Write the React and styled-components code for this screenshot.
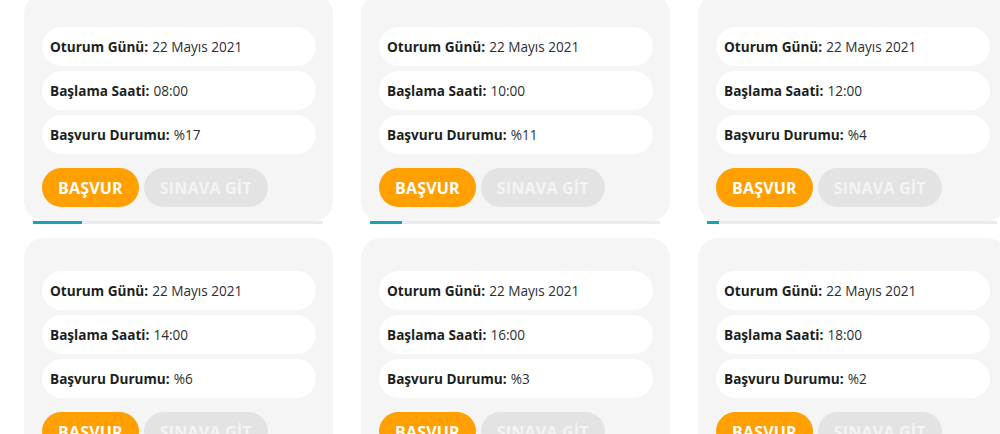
import React from "react"
import styled, { createGlobalStyle } from "styled-components"

const GlobalStyle = createGlobalStyle`
  body {
    margin: 0;
    background: #fff;
    overflow: hidden;
    font-family: "Open Sans", "Noto Sans", sans-serif;
  }
`

const Grid = styled.div`
  display: grid;
  grid-template-columns: repeat(3, 309px);
  column-gap: 28px;
  row-gap: 14px;
  margin: -6px 0 0 24px;
`

const Column = styled.div`
  display: flex;
  flex-direction: column;
`

const Card = styled.div`
  background: #f5f5f5;
  border-radius: 20px;
  padding: 33px 17px 14px 18px;
  display: flex;
  flex-direction: column;
  gap: 5px;
`

const Row = styled.div`
  height: 39px;
  background: #fff;
  border-radius: 20px;
  display: flex;
  align-items: center;
  padding: 0 8px;
  font-size: 13.6px;
  color: #2b2f33;

  b {
    font-weight: 700;
    color: #1c1f22;
    margin-right: 4px;
  }
`

const Actions = styled.div`
  display: flex;
  gap: 5px;
  margin-top: 9px;
`

const Button = styled.button`
  height: 39px;
  border: 0;
  border-radius: 20px;
  padding: 0 16px;
  font-family: inherit;
  font-size: 16px;
  font-weight: 700;
  letter-spacing: 0.2px;
  background: ${(p) => (p.$disabled ? "#e3e3e3" : "#ff9f00")};
  color: ${(p) => (p.$disabled ? "#f4f4f4" : "#fff")};
`

const Track = styled.div`
  height: 3px;
  background: #e9ecef;
  margin: 0 10px 0 9px;
`

const Fill = styled.div`
  height: 100%;
  background: #17a2b8;
`

const sessions = [
  { time: "08:00", pct: 17 },
  { time: "10:00", pct: 11 },
  { time: "12:00", pct: 4 },
  { time: "14:00", pct: 6 },
  { time: "16:00", pct: 3 },
  { time: "18:00", pct: 2 },
]

const App = () => (
  <>
    <GlobalStyle />
    <Grid>
      {sessions.map((s) => (
        <Column key={s.time}>
          <Card>
            <Row>
              <b>Oturum Günü:</b> 22 Mayıs 2021
            </Row>
            <Row>
              <b>Başlama Saati:</b> {s.time}
            </Row>
            <Row>
              <b>Başvuru Durumu:</b> %{s.pct}
            </Row>
            <Actions>
              <Button>BAŞVUR</Button>
              <Button $disabled>SINAVA GİT</Button>
            </Actions>
          </Card>
          <Track>
            <Fill style={{ width: `${s.pct}%` }} />
          </Track>
        </Column>
      ))}
    </Grid>
  </>
)

export default App
